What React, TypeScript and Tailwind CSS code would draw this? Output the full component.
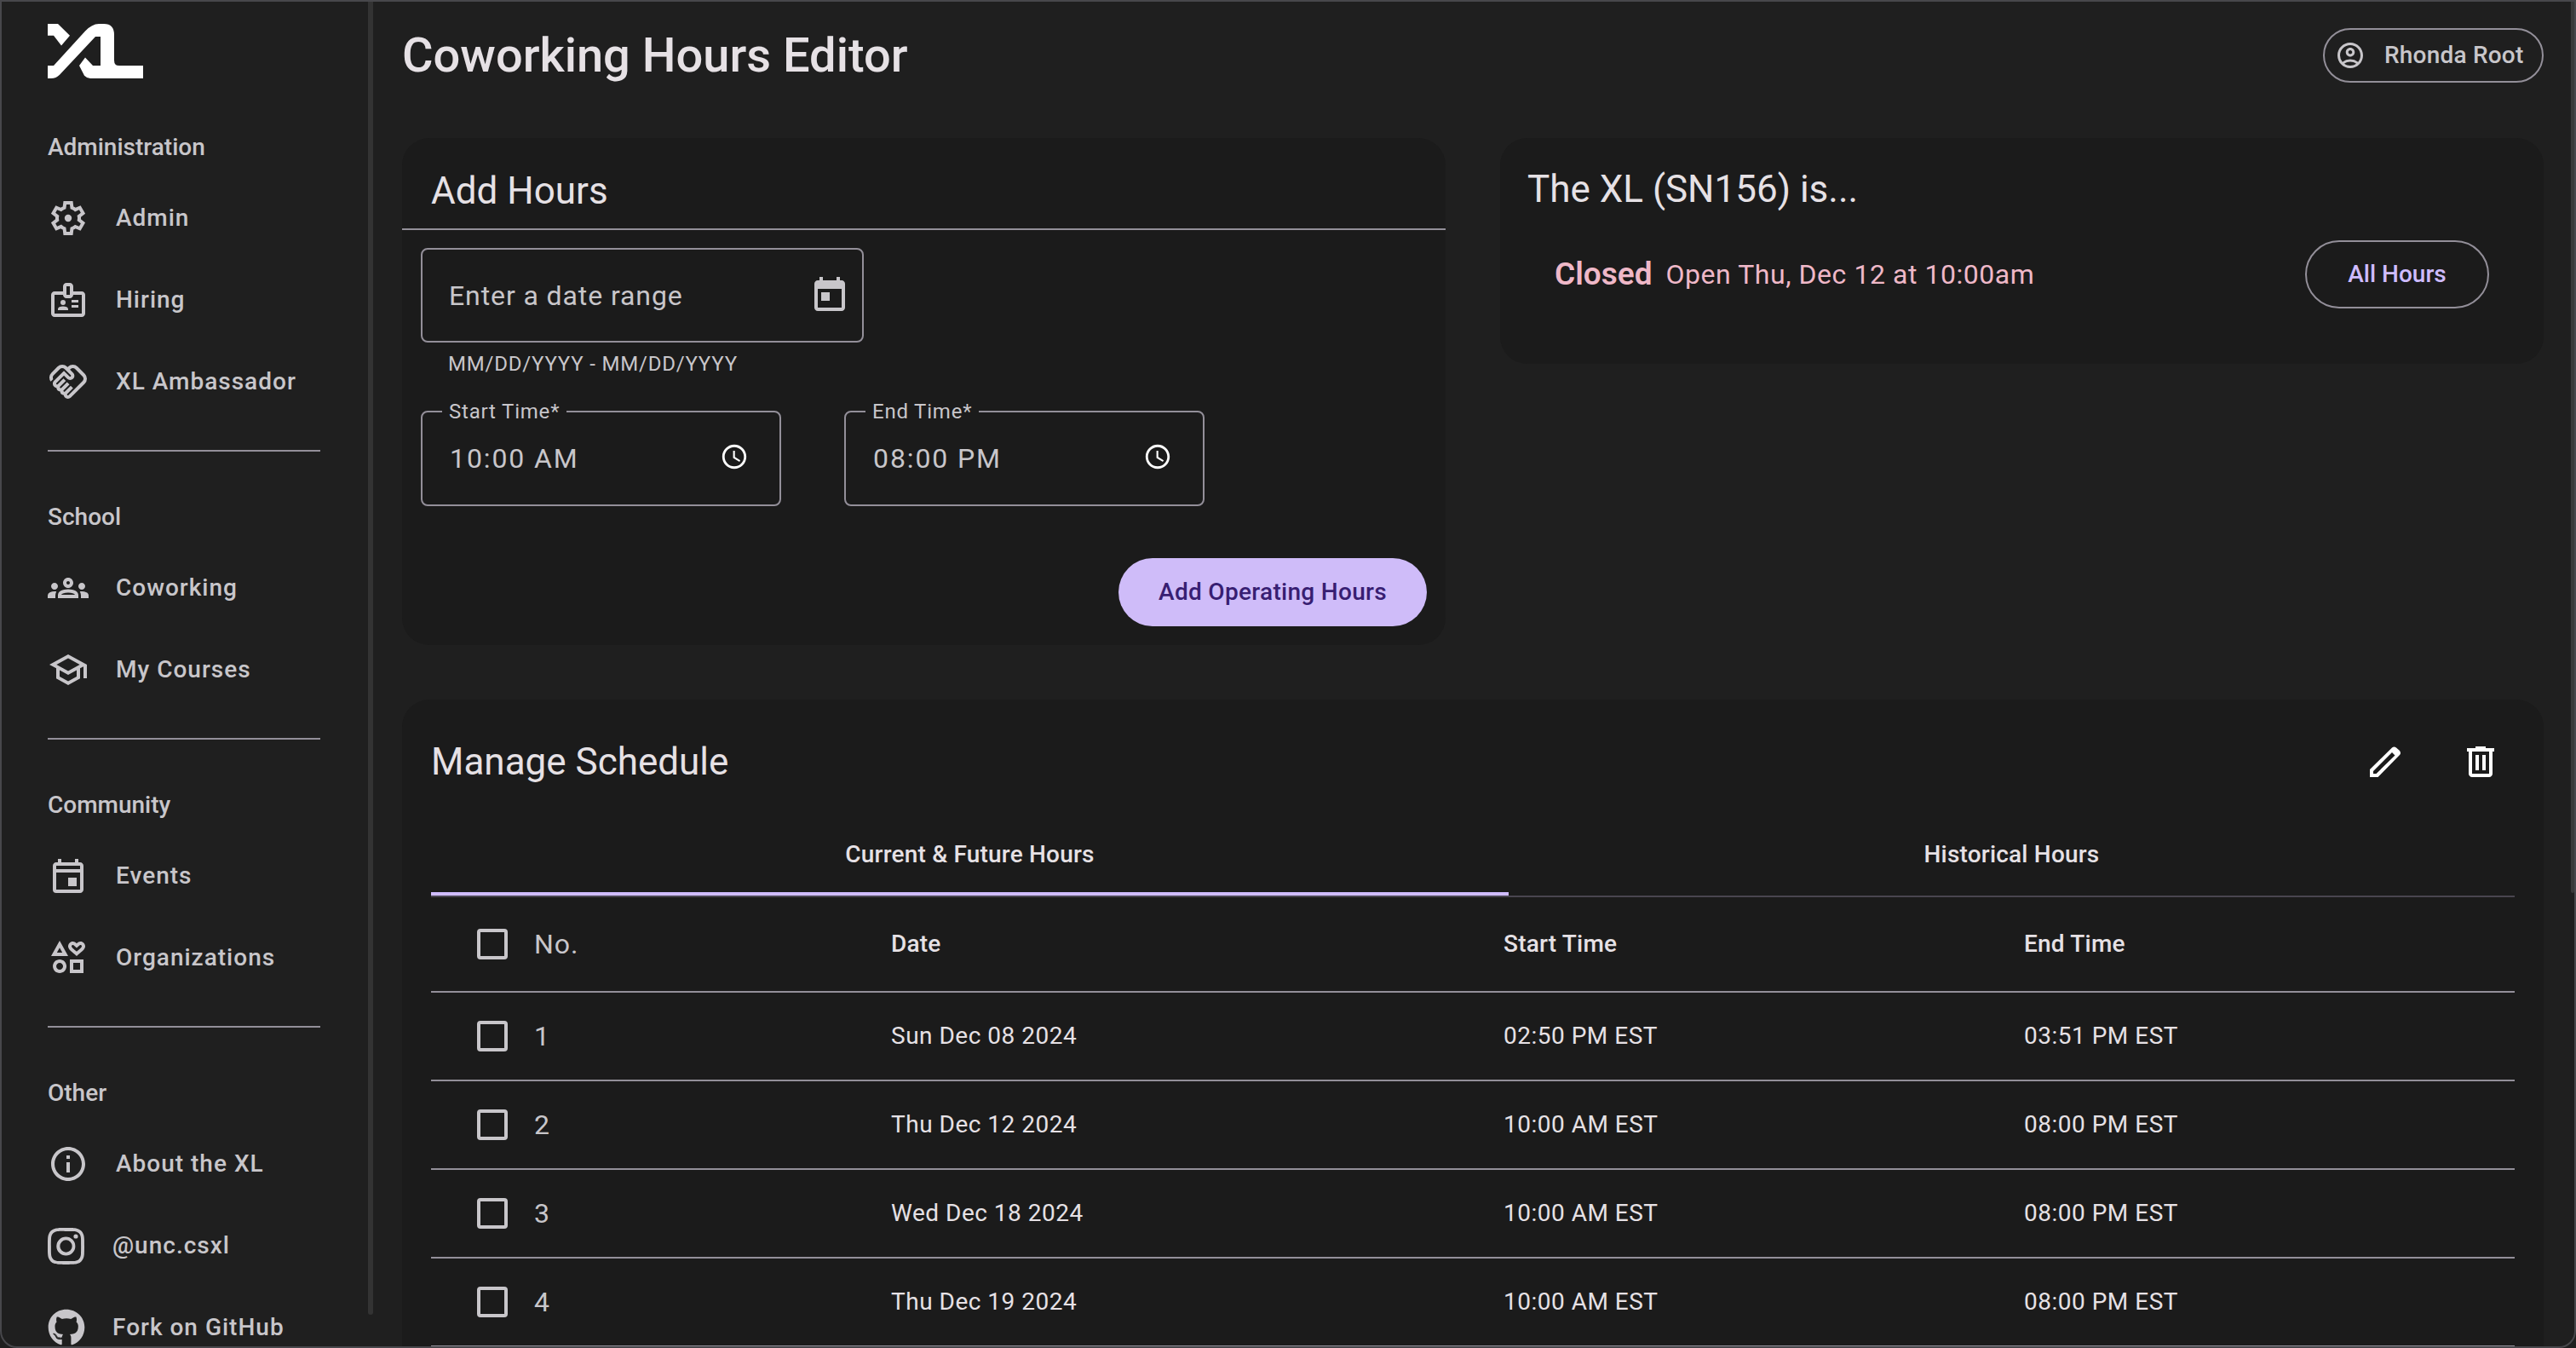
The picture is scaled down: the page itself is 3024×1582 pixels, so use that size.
import type { ReactNode } from 'react';
import {
  MdOutlineBadge,
  MdOutlineHandshake,
  MdOutlineGroups,
  MdOutlineSchool,
  MdOutlineEvent,
  MdOutlineInterests,
  MdOutlineInfo,
  MdOutlineAccountCircle,
  MdOutlineAccessTime,
} from 'react-icons/md';
import { FaGithub } from 'react-icons/fa';
import { BsInstagram } from 'react-icons/bs';

type NavItem = { label: string; icon: ReactNode; brand?: boolean };

function GearIcon() {
  return (
    <svg width="48" height="48" viewBox="0 -960 960 960" fill="currentColor">
      <path d="m370-80-16-128q-13-5-24.5-12T307-235l-119 50L78-375l103-78q-1-7-1-13.5v-27q0-6.5 1-13.5L78-585l110-190 119 50q11-8 23-15t24-12l16-128h220l16 128q13 5 24.5 12t22.5 15l119-50 110 190-103 78q1 7 1 13.5v27q0 6.5-2 13.5l103 78-110 190-118-50q-11 8-23 15t-24 12L590-80H370Zm70-80h79l14-106q31-8 57.5-23.5T639-327l99 41 39-68-86-65q5-14 7-29.5t2-31.5q0-16-2-31.5t-7-29.5l86-65-39-68-99 42q-22-23-48.5-38.5T533-694l-13-106h-79l-14 106q-31 8-57.5 23.5T321-633l-99-41-39 68 86 64q-5 15-7 30t-2 32q0 16 2 31t7 30l-86 65 39 68 99-42q22 23 48.5 38.5T427-266l13 106Z" />
      <circle cx="480" cy="-480" r="84" />
    </svg>
  );
}

const sections: { title: string; items: NavItem[] }[] = [
  {
    title: 'Administration',
    items: [
      { label: 'Admin', icon: <GearIcon /> },
      { label: 'Hiring', icon: <MdOutlineBadge size={48} /> },
      { label: 'XL Ambassador', icon: <MdOutlineHandshake size={48} /> },
    ],
  },
  {
    title: 'School',
    items: [
      { label: 'Coworking', icon: <MdOutlineGroups size={48} /> },
      { label: 'My Courses', icon: <MdOutlineSchool size={48} /> },
    ],
  },
  {
    title: 'Community',
    items: [
      { label: 'Events', icon: <MdOutlineEvent size={48} /> },
      { label: 'Organizations', icon: <MdOutlineInterests size={48} /> },
    ],
  },
  {
    title: 'Other',
    items: [
      { label: 'About the XL', icon: <MdOutlineInfo size={48} /> },
      { label: '@unc.csxl', icon: <BsInstagram size={43} />, brand: true },
      { label: 'Fork on GitHub', icon: <FaGithub size={44} />, brand: true },
    ],
  },
];

const rows = [
  { no: 1, date: 'Sun Dec 08 2024', start: '02:50 PM EST', end: '03:51 PM EST' },
  { no: 2, date: 'Thu Dec 12 2024', start: '10:00 AM EST', end: '08:00 PM EST' },
  { no: 3, date: 'Wed Dec 18 2024', start: '10:00 AM EST', end: '08:00 PM EST' },
  { no: 4, date: 'Thu Dec 19 2024', start: '10:00 AM EST', end: '08:00 PM EST' },
];

function Logo() {
  return (
    <svg width="112" height="64" viewBox="0 0 112 60" preserveAspectRatio="none" fill="#fff">
      <path d="M0 0H12L26 13L16 24L7 13H0Z" />
      <path d="M0 46H7L44 8Q52 0 60 0H66Q78 0 78 12V40Q78 46 84 46H112V60H50Q46 60 43 57L37 46L44 37L53 46H62V14H56L14 56Q10 60 4 60H0Z" />
    </svg>
  );
}

function Sidebar() {
  return (
    <aside className="w-[437px] h-[1582px] shrink-0 overflow-hidden pl-[56px] pt-[28px] text-[#c8c6ca]">
      <Logo />
      {sections.map((section, i) => (
        <div key={section.title} className={i === 0 ? 'mt-[65px]' : ''}>
          <div className="h-[32px] flex items-center text-[28px] font-medium mb-[19px]">{section.title}</div>
          {section.items.map((item) => (
            <div key={item.label} className="h-[96px] flex items-center text-[28px] font-medium tracking-[1px]">
              <span className={item.brand ? 'w-[76px] shrink-0' : 'w-[48px] mr-[32px] shrink-0'}>{item.icon}</span>
              {item.label}
            </div>
          ))}
          {i < sections.length - 1 && <div className="w-[320px] h-[2px] bg-[#938f99] mt-[32px] mb-[61px]" />}
        </div>
      ))}
    </aside>
  );
}

function TimeField({ label, value }: { label: string; value: string }) {
  return (
    <div className="relative w-[423px] h-[112px] border-2 border-[#938f99] rounded-[8px] flex items-center justify-between pl-[32px] pr-[36px]">
      <span className="absolute left-[23px] top-[-15px] bg-[#1b1b1b] px-[8px] text-[24px] leading-[28px] tracking-[0.8px] text-[#c8c6ca]">
        {label}
      </span>
      <span className="text-[32px] tracking-[1.9px] text-[#c8c6ca]">{value}</span>
      <MdOutlineAccessTime size={34} color="#fff" className="mb-[4px]" />
    </div>
  );
}

function Checkbox() {
  return <div className="w-[36px] h-[36px] border-[4px] border-[#c8c6ca] rounded-[4px]" />;
}

const gridCols = 'grid grid-cols-[540px_719px_611px_1fr] items-center';

function ManageSchedule() {
  return (
    <section className="mt-[64px] bg-[#1b1b1b] rounded-[32px] px-[34px] h-[900px]">
      <div className="h-[86px] pt-[30px] mb-[17px] box-content flex items-center justify-between">
        <h2 className="text-[44px] text-[#e6e1e5]">Manage Schedule</h2>
        <div className="flex items-center gap-[70px] pr-[16px]">
          <svg width="36" height="36" viewBox="0 0 36 36" fill="#fff">
            <path
              fillRule="evenodd"
              d="M0 36V27L26 1.5Q28.5 -0.5 31 1.5L35 5Q37 8 35 10L9.5 36ZM4 32H7.5L29.5 10.5L26 7L4 29Z"
            />
          </svg>
          <svg width="48" height="48" viewBox="0 -960 960 960" fill="#fff">
            <path d="M280-120q-33 0-56.5-23.5T200-200v-520h-40v-80h200v-40h240v40h200v80h-40v520q0 33-23.5 56.5T680-120H280Zm400-600H280v520h400v-520ZM360-280h80v-360h-80v360Zm160 0h80v-360h-80v360ZM280-720v520-520Z" />
          </svg>
        </div>
      </div>
      <div className="grid grid-cols-[1265px_1fr] h-[99px] border-b-2 border-[#49454f] text-[28px] font-medium tracking-[0.2px] text-[#e6e1e5]">
        <div className="flex items-center justify-center border-b-4 border-[#cfbcff] pt-[4px]">Current &amp; Future Hours</div>
        <div className="flex items-center justify-center border-b-4 border-transparent pt-[4px]">Historical Hours</div>
      </div>
      <div className={`${gridCols} h-[112px] border-b-2 border-[#938f99] text-[28px] font-medium tracking-[0.2px] text-[#e6e1e5]`}>
        <div className="flex items-center gap-[31px] pl-[54px]">
          <Checkbox />
          <span className="text-[32px] font-normal tracking-[1px] text-[#c8c6ca]">No.</span>
        </div>
        <div>Date</div>
        <div>Start Time</div>
        <div>End Time</div>
      </div>
      {rows.map((row) => (
        <div key={row.no} className={`${gridCols} h-[104px] border-b-2 border-[#938f99] text-[28px] tracking-[0.5px] text-[#e6e1e5]`}>
          <div className="flex items-center gap-[31px] pl-[54px]">
            <Checkbox />
            <span className="text-[32px] text-[#c8c6ca]">{row.no}</span>
          </div>
          <div>{row.date}</div>
          <div>{row.start}</div>
          <div>{row.end}</div>
        </div>
      ))}
    </section>
  );
}

export default function App() {
  return (
    <div className="relative w-[3024px] h-[1582px] overflow-hidden bg-[#1f1f1f] flex" style={{ fontFamily: 'Roboto, sans-serif' }}>
      <Sidebar />
      <main className="flex-1 min-w-0 pl-[35px] pr-[38px]">
        <header className="h-[130px] flex items-center justify-between">
          <h1 className="text-[56px] font-medium text-[#e6e1e5]">Coworking Hours Editor</h1>
          <button className="w-[259px] h-[64px] border-2 border-[#938f99] rounded-full flex items-center pl-[12px] text-[28px] font-medium tracking-[0.2px] text-[#c8c6ca]">
            <MdOutlineAccountCircle size={36} />
            <span className="ml-[22px]">Rhonda Root</span>
          </button>
        </header>
        <div className="mt-[32px] flex items-start gap-[64px]">
          <section className="w-[1225px] shrink-0 h-[595px] bg-[#1b1b1b] rounded-[32px] pt-[34px]">
            <h2 className="h-[74px] leading-[56px] px-[34px] text-[44px] text-[#e6e1e5] border-b-2 border-[#938f99]">Add Hours</h2>
            <div className="pl-[22px] pr-[22px] pt-[21px]">
              <div className="w-[520px] h-[111px] border-2 border-[#938f99] rounded-[8px] flex items-center justify-between pl-[31px] pr-[14px]">
                <span className="text-[32px] tracking-[0.9px] text-[#c8c6ca]">Enter a date range</span>
                <svg width="48" height="48" viewBox="0 0 24 24" fill="#c8c6ca">
                  <path d="M19 3h-1V1h-2v2H8V1H6v2H5c-1.11 0-1.99.9-1.99 2L3 19c0 1.1.89 2 2 2h14c1.1 0 2-.9 2-2V5c0-1.1-.9-2-2-2zm0 16H5V8h14v11zM7 10h5v5H7z" />
                </svg>
              </div>
              <div className="pl-[32px] h-[50px] flex items-center text-[24px] tracking-[0.8px] text-[#c8c6ca]">MM/DD/YYYY - MM/DD/YYYY</div>
              <div className="mt-[30px] flex gap-[74px]">
                <TimeField label="Start Time*" value="10:00 AM" />
                <TimeField label="End Time*" value="08:00 PM" />
              </div>
              <div className="mt-[61px] flex justify-end">
                <button className="w-[362px] h-[80px] rounded-full bg-[#cfbcf9] text-[28px] font-medium tracking-[0.3px] text-[#381e72]">Add Operating Hours</button>
              </div>
            </div>
          </section>
          <section className="flex-1 h-[265px] bg-[#1b1b1b] rounded-[32px] px-[32px] pt-[32px]">
            <h2 className="leading-[56px] text-[44px] text-[#e6e1e5]">The XL (SN156) is...</h2>
            <div className="mt-[32px] flex items-center justify-between pl-[32px] pr-[32px]">
              <div className="flex items-center text-[#efb8c8]">
                <span className="text-[37px] font-semibold">Closed</span>
                <span className="ml-[16px] text-[32px] tracking-[0.55px]">Open Thu, Dec 12 at 10:00am</span>
              </div>
              <button className="w-[216px] h-[80px] border-2 border-[#938f99] rounded-full text-[28px] font-medium text-[#cfbcff]">All Hours</button>
            </div>
          </section>
        </div>
        <ManageSchedule />
      </main>
      {/* scrollbars */}
      <div className="absolute left-[432px] top-[2px] w-[6px] h-[1541px] rounded-b-[4px] bg-[#333333]" />
      <div className="absolute right-[2px] top-[2px] w-[4px] h-[1046px] rounded-b-[4px] bg-[#3a3a3a]" />
      {/* window frame */}
      <div className="absolute inset-0 border-2 border-[#47474b] rounded-b-[20px] pointer-events-none" />
    </div>
  );
}
